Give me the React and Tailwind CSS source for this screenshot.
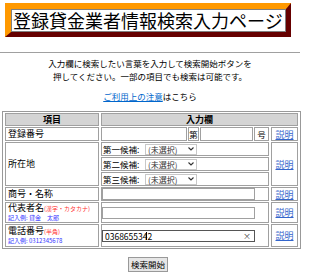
import React from 'react';

const cell = 'border border-[#a0a0a0] p-0 align-middle';

const Explain = () => (
  <span className="text-[9px] leading-[11px] text-[#3366cc] underline">説明</span>
);

const Chevron = () => (
  <svg width="6" height="4" viewBox="0 0 6 4" className="shrink-0">
    <path d="M0.5 0.5 L3 3 L5.5 0.5" fill="none" stroke="#333" strokeWidth="1.1" />
  </svg>
);

const Candidate = ({ label }) => (
  <div className="flex h-[12px] items-center">
    <span className="w-[43px] pl-[1px] text-[8.5px] leading-[10px]">{label}</span>
    <div className="flex h-[11px] w-[52px] items-center justify-between border border-[#c8c8c8] bg-white px-[2px]">
      <span className="text-[8px] leading-[9px] text-[#333]">(未選択)</span>
      <Chevron />
    </div>
  </div>
);

const TextBox = ({ value, focused }) => (
  <div className="relative w-[153px]">
    <input
      readOnly
      defaultValue={value}
      className={`block h-[12px] w-[153px] bg-white px-[2px] text-[8.5px] leading-[10px] outline-none ${
        focused ? 'border border-[#555]' : 'border border-[#a0a0a0]'
      }`}
    />
    {focused && (
      <>
        <span className="absolute left-[44px] top-[2px] h-[8px] w-px bg-black" />
        <span className="absolute right-[4px] top-0 text-[8px] leading-[12px] text-[#444]">×</span>
      </>
    )}
  </div>
);

export default function App() {
  return (
    <div className="w-[300px] bg-white pt-[3px] font-['Noto_Sans_CJK_JP',sans-serif] text-black">
      {/* title */}
      <div className="ml-[5px] w-[286px] border-t-[6px] border-l-[6px] border-b-[5px] border-r-[5px] border-t-[#ff9900] border-l-[#ff9900] border-b-[#660000] border-r-[#660000]">
        <div className="h-[23px] border border-[#808080] bg-white pl-[1px] text-[18px] leading-[21px] whitespace-nowrap">
          登録貸金業者情報検索入力ページ
        </div>
      </div>

      <div className="mt-[15px] border-t border-[#a0a0a0]" />

      <p className="mt-[4px] text-center text-[8.5px] leading-[13px]">
        入力欄に検索したい言葉を入力して検索開始ボタンを
        <br />
        押してください。一部の項目でも検索は可能です。
      </p>

      <p className="mt-[7px] text-center text-[8.5px] leading-[13px]">
        <span className="text-[#0066cc] underline">ご利用上の注意</span>はこちら
      </p>

      <table className="mt-[8px] ml-[2px] w-[296px] table-fixed border-separate border-spacing-x-[2px] border-spacing-y-[1px] border border-[#999] text-[9px] leading-[10px]">
        <colgroup>
          <col className="w-[94px]" />
          <col className="w-[168px]" />
          <col className="w-[27px]" />
        </colgroup>
        <tbody>
          <tr>
            <th className={`${cell} h-[13px] bg-[#d4d4d4] font-bold`}>項目</th>
            <th colSpan={2} className={`${cell} h-[13px] bg-[#d4d4d4] font-bold`}>
              入力欄
            </th>
          </tr>

          <tr>
            <td className={`${cell} h-[14px] pl-[2px]`}>登録番号</td>
            <td className="p-0">
              <div className="flex h-[14px] gap-[1px]">
                <div className="w-[86px] border border-[#a0a0a0] bg-white" />
                <div className="flex w-[11px] items-center justify-center border border-[#a0a0a0] text-[8.5px]">第</div>
                <div className="w-[53px] border border-[#a0a0a0] bg-white" />
                <div className="flex w-[15px] items-center justify-center border border-[#a0a0a0] text-[8.5px]">号</div>
              </div>
            </td>
            <td className={`${cell} text-center`}>
              <Explain />
            </td>
          </tr>

          <tr>
            <td rowSpan={3} className={`${cell} pl-[2px]`}>所在地</td>
            <td className={cell}>
              <Candidate label="第一候補:" />
            </td>
            <td rowSpan={3} className={`${cell} text-center`}>
              <Explain />
            </td>
          </tr>
          <tr>
            <td className={cell}>
              <Candidate label="第二候補:" />
            </td>
          </tr>
          <tr>
            <td className={cell}>
              <Candidate label="第三候補:" />
            </td>
          </tr>

          <tr>
            <td className={`${cell} h-[14px] pl-[2px]`}>商号・名称</td>
            <td className={cell}>
              <TextBox value="" />
            </td>
            <td className={`${cell} text-center`}>
              <Explain />
            </td>
          </tr>

          <tr>
            <td className={`${cell} h-[21px] pl-[2px]`}>
              <div className="whitespace-nowrap text-[9px] leading-[10px]">
                代表者名<span className="text-[6px] text-[#ff3333]">(漢字・カタカナ)</span>
              </div>
              <div className="whitespace-nowrap text-[6px] leading-[8px] text-[#3333ff]">記入例: 貸金　太郎</div>
            </td>
            <td className={cell}>
              <TextBox value="" />
            </td>
            <td className={`${cell} text-center`}>
              <Explain />
            </td>
          </tr>

          <tr>
            <td className={`${cell} h-[23px] pl-[2px]`}>
              <div className="whitespace-nowrap text-[9px] leading-[10px]">
                電話番号<span className="text-[6px] text-[#ff3333]">(半角)</span>
              </div>
              <div className="whitespace-nowrap text-[6px] leading-[8px] text-[#3333ff]">記入例: 0312345678</div>
            </td>
            <td className={cell}>
              <TextBox value="0368655342" focused />
            </td>
            <td className={`${cell} text-center`}>
              <Explain />
            </td>
          </tr>
        </tbody>
      </table>

      <div className="mt-[8px] flex justify-center pr-[4px]">
        <button className="h-[15px] w-[40px] border border-[#999] bg-[#e6e6e6] text-[8.5px] leading-[13px]">
          検索開始
        </button>
      </div>
    </div>
  );
}
